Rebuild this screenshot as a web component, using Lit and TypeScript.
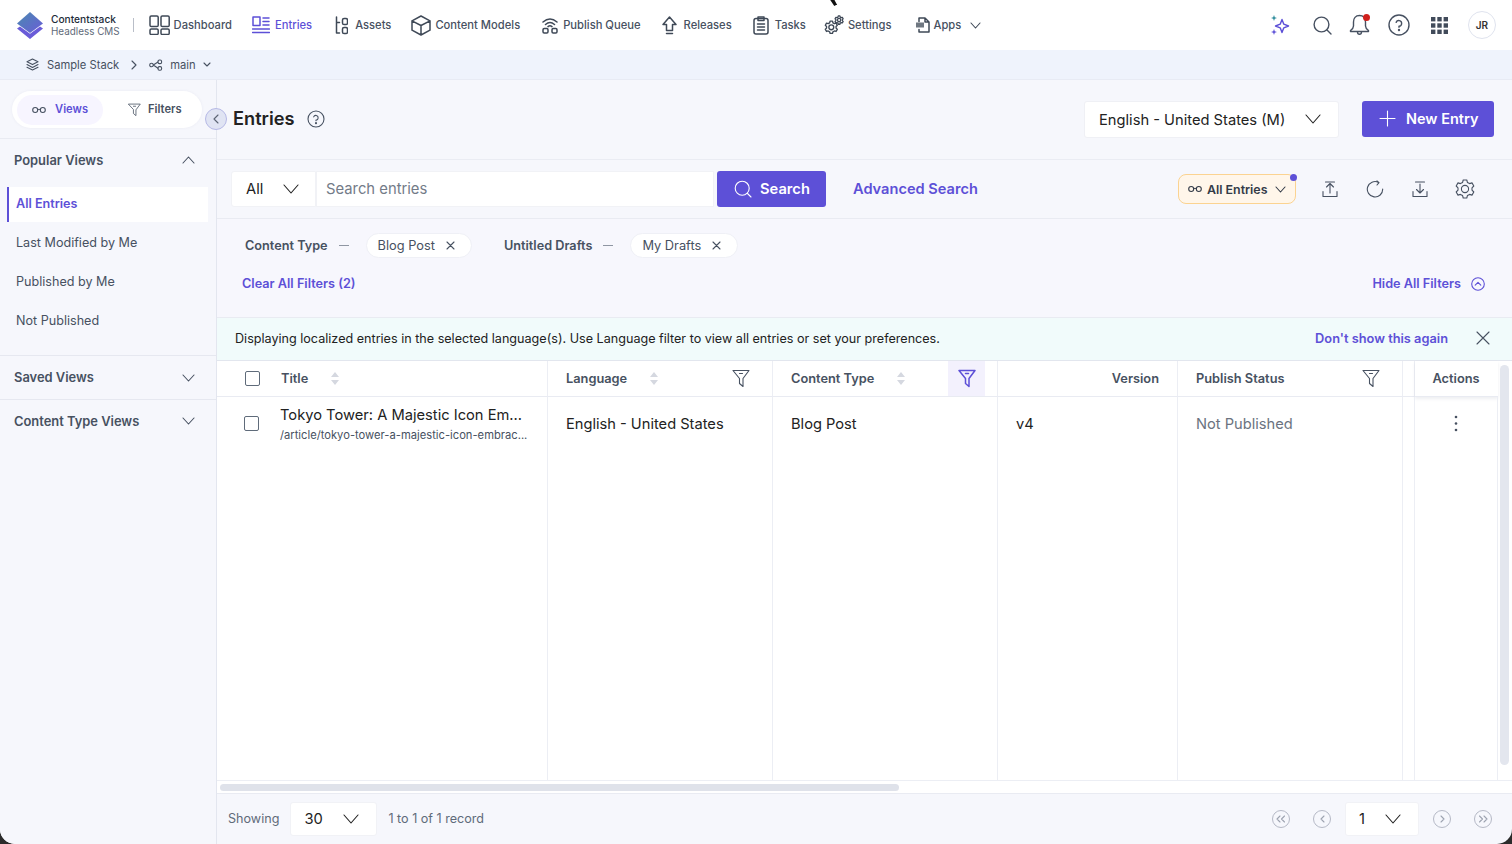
import { LitElement, html, css, svg } from 'lit';
import { customElement } from 'lit/decorators.js';

const icon = (w: number, h: number, body: unknown) => html`<svg class="ic" width=${w} height=${h} viewBox="0 0 ${w} ${h}" fill="none" stroke="currentColor" stroke-width="1.1" stroke-linecap="round" stroke-linejoin="round">${body}</svg>`;

const chevDown = (w = 14) => icon(w, Math.round(w * 0.6), svg`<path d="M1 1 L${w / 2} ${Math.round(w * 0.6) - 1} L${w - 1} 1"/>`);
const chevUp = (w = 14) => icon(w, Math.round(w * 0.6), svg`<path d="M1 ${Math.round(w * 0.6) - 1} L${w / 2} 1 L${w - 1} ${Math.round(w * 0.6) - 1}"/>`);
const cross = (s = 10) => icon(s, s, svg`<path d="M1 1 L${s - 1} ${s - 1} M${s - 1} 1 L1 ${s - 1}"/>`);
const glasses = () => icon(14, 8, svg`<circle cx="3.2" cy="4" r="2.5"/><circle cx="10.8" cy="4" r="2.5"/><path d="M5.7 3.6 Q7 2.8 8.3 3.6"/>`);
const funnel = (s = 18) => icon(s, s + 1, svg`<g transform="scale(${s / 18})"><path d="M1 1.5 H17 L11 9.5 V17.5 L7.5 14.5 V9.5 Z"/><path d="M7.5 4.5 H10.5"/></g>`);
const sort = () => html`<svg class="ic sort" width="8" height="13" viewBox="0 0 8 13" fill="currentColor"><path d="M4 0 L8 5 H0 Z M4 13 L0 8 H8 Z"/></svg>`;
const helpIc = (s: number) => icon(s, s, svg`<circle cx=${s / 2} cy=${s / 2} r=${s / 2 - 1}/><path d="M${s * 0.37} ${s * 0.38} A${s * 0.13} ${s * 0.13} 0 1 1 ${s / 2} ${s * 0.56} V${s * 0.6}"/><circle cx=${s / 2} cy=${s * 0.73} r="0.5"/>`);
const gearPath = svg`<path d="M8.2 1 H11.8 L12.4 3.4 L14.6 4.6 L17 3.9 L18.8 7 L17 8.8 V11.2 L18.8 13 L17 16.1 L14.6 15.4 L12.4 16.6 L11.8 19 H8.2 L7.6 16.6 L5.4 15.4 L3 16.1 L1.2 13 L3 11.2 V8.8 L1.2 7 L3 3.9 L5.4 4.6 L7.6 3.4 Z"/><circle cx="10" cy="10" r="3.6"/>`;

const navItems = [
  { label: 'Dashboard', cls: 'gap-4', icon: icon(21, 20, svg`<rect x="1" y="1" width="8.2" height="10.5" rx="1.3"/><rect x="12" y="1" width="8.2" height="10.5" rx="1.3"/><rect x="1" y="14" width="8.2" height="5.5" rx="1.3"/><rect x="12" y="14" width="8.2" height="5.5" rx="1.3"/>`) },
  { label: 'Entries', cls: 'gap-5 active', icon: icon(18, 19, svg`<rect x="1" y="1" width="7" height="8.5"/><path d="M11 2 H17 M11 5.5 H17 M11 9 H17 M0.5 13 H17.5 M0.5 16.5 H17.5"/>`) },
  { label: 'Assets', cls: 'gap-7 ml-p3', icon: icon(13, 19, svg`<path d="M1.5 1 V17 H4.5 M1.5 6.5 H4.5"/><rect x="7.5" y="2.5" width="5" height="6" rx="1.6"/><rect x="7.5" y="11.5" width="5" height="6" rx="1.6"/>`) },
  { label: 'Content Models', cls: 'gap-4', icon: icon(20, 21, svg`<path d="M10 1 L19 5.8 V15.2 L10 20 L1 15.2 V5.8 Z M1 5.8 L10 10.5 L19 5.8 M10 10.5 V20"/>`) },
  { label: 'Publish Queue', cls: 'gap-5 ml-p2', icon: icon(16, 17, svg`<path d="M1 5 Q8 -1 15 5 M3.5 7.5 Q8 3.5 12.5 7.5 M6 9.6 Q8 8 10 9.6"/><rect x="1" y="11.5" width="5" height="4.5" rx="1.2"/><rect x="10" y="11.5" width="5" height="4.5" rx="1.2"/>`) },
  { label: 'Releases', cls: 'gap-7 ml-p1', icon: icon(15, 19, svg`<path d="M7.5 1 L14 8.5 H10.5 V14.5 H4.5 V8.5 H1 Z M4.5 17.5 H10.5"/>`) },
  { label: 'Tasks', cls: 'gap-6 ml-p1', icon: icon(16, 19, svg`<rect x="1" y="2.5" width="14" height="15.5" rx="2"/><path d="M5 1 H11 V4.5 H5 Z M4.5 8 H11.5 M4.5 11 H11.5 M4.5 14 H11.5"/>`) },
  { label: 'Settings', cls: 'gap-4 ml-n2', icon: icon(20, 20, svg`<g transform="translate(0.5 5.5) scale(.68)" stroke-width="2"><path d="M8.2 1 H11.8 L12.4 3.4 L14.6 4.6 L17 3.9 L18.8 7 L17 8.8 V11.2 L18.8 13 L17 16.1 L14.6 15.4 L12.4 16.6 L11.8 19 H8.2 L7.6 16.6 L5.4 15.4 L3 16.1 L1.2 13 L3 11.2 V8.8 L1.2 7 L3 3.9 L5.4 4.6 L7.6 3.4 Z"/><circle cx="10" cy="10" r="3.6"/></g><g transform="translate(10.5 0.5) scale(.46)" stroke-width="2.8"><path d="M8.2 1 H11.8 L12.4 3.4 L14.6 4.6 L17 3.9 L18.8 7 L17 8.8 V11.2 L18.8 13 L17 16.1 L14.6 15.4 L12.4 16.6 L11.8 19 H8.2 L7.6 16.6 L5.4 15.4 L3 16.1 L1.2 13 L3 11.2 V8.8 L1.2 7 L3 3.9 L5.4 4.6 L7.6 3.4 Z"/><circle cx="10" cy="10" r="3.6"/></g>`) },
  { label: 'Apps', cls: 'gap-4 ml-p3', icon: icon(15, 16, svg`<path d="M4 4.5 V1 H10 L14 5 V15 H4 V12.5 M10 1 V5 H14"/><rect x="1" y="5.5" width="8" height="5" fill="currentColor" stroke="none" opacity=".75"/>`) },
];

const sideItems = ['All Entries', 'Last Modified by Me', 'Published by Me', 'Not Published'];

@customElement('app-root')
export class AppRoot extends LitElement {
  static styles = css`
    :host { display: block; width: 1512px; height: 844px; background: #2b2b2b; overflow: hidden; font-family: Inter, "Noto Sans", sans-serif; color: #222; }
    * { box-sizing: border-box; margin: 0; padding: 0; }
    .ic { display: block; flex: none; }
    .app { position: relative; height: 844px; display: flex; flex-direction: column; background: #f6f7fc; border-radius: 0 0 15px 15px; overflow: hidden; }
    .cursor { position: absolute; left: 822px; top: -8px; }

    .top { height: 50px; flex: none; background: #fff; display: flex; align-items: center; padding-left: 17px; color: #475161; }
    .logo { display: flex; align-items: center; gap: 8px; }
    .logo-t { font-size: 9.9px; line-height: 12px; color: #5f6b7a; white-space: nowrap; }
    .logo-t b { display: block; font-size: 10.2px; line-height: 11px; font-weight: 500; color: #222b38; }
    .sep { width: 1px; height: 14px; background: #b9bec8; margin: 0 15px 0 13px; }
    .nav { display: flex; align-items: center; gap: 20px; }
    .nav-it { display: flex; align-items: center; font-size: 11.2px; font-weight: 500; color: #475161; white-space: nowrap; }
    .nav-it .ic { stroke-width: 1.5; color: #3f4957; }
    .nav-it.active .ic { color: #5d50d7; }
    .gap-4 { gap: 4px; } .gap-5 { gap: 5px; } .gap-6 { gap: 6px; } .gap-7 { gap: 7px; }
    .ml-p1 { margin-left: 1px; } .ml-p2 { margin-left: 2px; } .ml-n2 { margin-left: -2px; } .ml-p3 { margin-left: 3px; }
    .nav-it.active { color: #5d50d7; }
    .nav-it .more { margin-left: 5px; }
    .nav-it .more .ic { stroke-width: 1.1; }
    .top-r { margin-left: auto; display: flex; align-items: center; padding-right: 16px; color: #475161; }
    .top-r .ic { stroke-width: 1.4; }
    .spark { margin-right: 23px; }
    .srch { margin-right: 17px; }
    .bell { margin-right: 18px; position: relative; }
    .bell i { position: absolute; right: 0; top: 0; width: 7px; height: 7px; border-radius: 50%; background: #d0201c; }
    .hlp { margin-right: 21px; }
    .dots { margin-right: 20px; color: #414b5a; }
    .avatar { width: 28px; height: 28px; border-radius: 50%; border: 1px solid #dfe3ee; display: flex; align-items: center; justify-content: center; font-size: 10px; font-weight: 600; color: #333; }

    .sub { height: 30px; flex: none; background: #eff3fc; border-bottom: 1px solid #e8ebf4; display: flex; align-items: center; padding-left: 26px; font-size: 11.2px; font-weight: 400; color: #475161; }
    .sub .name { margin-left: 8px; }
    .sub .gt { margin: 0 12px 0 12px; }
    .sub .main { margin: 0 7px 0 7px; }

    .body { flex: 1; display: flex; min-height: 0; position: relative; }
    .side { width: 217px; flex: none; border-right: 1px solid #e3e6ef; background: #f6f7fc; display: flex; flex-direction: column; }
    .tabs-box { height: 59px; flex: none; padding: 11px 0 0 12px; border-bottom: 1px solid #e9ebf2; }
    .tabs { width: 190px; height: 37px; background: #fff; border-radius: 19px; display: flex; align-items: center; padding-left: 5px; box-shadow: 0 0 3px rgba(90,90,140,.08); }
    .tab { display: flex; align-items: center; height: 30px; font-size: 11.2px; font-weight: 600; color: #475161; }
    .tab span { padding-bottom: 2px; }
    .tab.on { width: 86px; padding-left: 15px; gap: 9px; color: #5d50d7; background: #f7f5ff; border-radius: 15px; }
    .tab.on .ic { color: #475161; }
    .tab.off { margin-left: 25px; gap: 7px; }
    .sec { display: flex; align-items: center; justify-content: space-between; padding: 0 21px 0 14px; font-size: 12.9px; font-weight: 600; color: #475161; }
    .sec.first { height: 42px; margin-bottom: 6px; }
    .sec.rule { height: 44px; border-bottom: 1px solid #e6e8f0; }
    .sec.rule.last { border-bottom: none; padding-bottom: 2px; }
    .items { height: 169px; padding-left: 7px; padding-right: 8px; border-bottom: 1px solid #e6e8f0; }
    .item { height: 35px; margin-bottom: 4px; display: flex; align-items: center; padding: 0 0 2px 9px; font-size: 12.6px; color: #475161; }
    .item.on { background: #fff; border-left: 2px solid #5d50d7; padding-left: 7px; color: #5d50d7; font-weight: 600; }

    .collapse { position: absolute; left: 205px; top: 28px; width: 22px; height: 22px; border-radius: 50%; background: #e0e4f3; border: 1px solid #b6b9e6; display: flex; align-items: center; justify-content: center; color: #5b6473; z-index: 2; }

    .content { flex: 1; min-width: 0; display: flex; flex-direction: column; }
    .head { height: 80px; flex: none; border-bottom: 1px solid #eaecf3; display: flex; align-items: center; padding: 0 18px 2px 16px; }
    .head h1 { font-size: 18.2px; font-weight: 600; color: #222; margin-bottom: 2px; }
    .head .hq { margin-left: 13px; color: #475161; }
    .lang { margin-left: auto; width: 255px; height: 37px; background: #fff; border: 1px solid #eff0f5; border-radius: 3px; display: flex; align-items: center; justify-content: space-between; padding: 0 17px 0 14px; font-size: 14.7px; color: #222; margin-top: 1px; }
    .lang span { padding-top: 2px; }
    .new { margin-left: 23px; width: 132px; height: 36px; border-radius: 3px; background: #5d50d7; color: #fff; display: flex; align-items: center; gap: 10px; padding-left: 17px; font-size: 14.5px; font-weight: 600; }

    .search { height: 59px; flex: none; border-bottom: 1px solid #e9ebf2; display: flex; align-items: center; padding: 0 0 0 14px; }
    .sel-all { width: 85px; height: 36px; background: #fff; border: 1px solid #f1f2f6; border-radius: 3px 0 0 3px; display: flex; align-items: center; justify-content: space-between; padding: 0 16px 0 14px; font-size: 14.7px; color: #222; }
    .input { width: 398px; height: 36px; background: #fff; border: 1px solid #f1f2f6; display: flex; align-items: center; padding: 0 0 1px 9px; font-size: 14.8px; color: #737b88; }
    .sbtn { margin-left: 3px; width: 109px; height: 36px; background: #5d50d7; color: #fff; border-radius: 3px; display: flex; align-items: center; gap: 8px; padding-left: 17px; font-size: 14.7px; font-weight: 600; }
    .sbtn span { padding-bottom: 1px; }
    .adv { margin-left: 27px; padding-bottom: 1px; font-size: 14.6px; font-weight: 600; color: #5d50d7; }
    .allp { position: relative; margin-left: auto; width: 118px; height: 30px; background: #fff6ea; border: 1px solid #fbd391; border-radius: 8px; display: flex; align-items: center; gap: 5px; padding-left: 9px; font-size: 12.4px; font-weight: 600; color: #333b48; }
    .allp .cv { margin-left: 2px; }
    .allp i { position: absolute; right: -2px; top: -1px; width: 7px; height: 7px; border-radius: 50%; background: #5d50d7; }
    .tools { margin-left: 26px; display: flex; align-items: center; gap: 28px; padding-right: 37px; color: #475161; }
    .tools .last { margin-left: -1px; }

    .filters { height: 99px; flex: none; border-bottom: 1px solid #e9ebf2; background: #f7f7fd; display: flex; flex-direction: column; padding: 14px 27px 0 25px; }
    .f-row { display: flex; align-items: center; height: 25px; font-size: 12.8px; color: #475161; padding-left: 3px; }
    .f-row b { font-size: 12.7px; font-weight: 600; }
    .dash { width: 10px; height: 1px; background: #8f96a3; margin: 0 17px 0 11px; }
    .chip { height: 25px; background: #fff; border: 1px solid #eff0f6; border-radius: 13px; display: flex; align-items: center; gap: 11px; padding: 0 16px 0 11px; margin-right: 32px; }
    .f-act { display: flex; align-items: center; justify-content: space-between; margin-top: 18px; font-size: 12.7px; font-weight: 600; color: #5d50d7; }
    .f-hide { display: flex; align-items: center; gap: 10px; }

    .banner { height: 43px; flex: none; background: #f1fbfb; border-bottom: 1px solid #e2e6ee; display: flex; align-items: center; justify-content: space-between; padding: 0 22px 2px 18px; font-size: 12.6px; color: #222; }
    .banner span { display: flex; align-items: center; gap: 28px; font-size: 12.8px; font-weight: 600; color: #5d50d7; }
    .banner svg { color: #475161; }

    .tbl { flex: 1; min-height: 0; background: #fff; display: flex; position: relative; border-bottom: 1px solid #eceef4; }
    .grid { flex: 1; display: grid; grid-template-columns: 331px 225px 225px 180px 225px 12px 83px; grid-template-rows: 36px 1fr; }
    .th { display: flex; align-items: center; border-bottom: 1px solid #e9ebf2; border-right: 1px solid #eceef4; font-size: 12.8px; font-weight: 600; color: #475161; padding: 0 22px 0 18px; }
    .td { border-right: 1px solid #eceef4; padding: 18px 14px 0 18px; font-size: 14.65px; color: #222; line-height: 19px; }
    .th .sort { color: #d5d8e0; margin-left: 23px; }
    .th .fn { margin-left: auto; color: #475161; }
    .th.t { padding-left: 28px; }
    .cb { width: 15px; height: 15px; border: 1.5px solid #5f6b7a; border-radius: 2px; background: #fff; flex: none; }
    .th.t .lbl { margin-left: 21px; }
    .th.lit { padding-right: 0; }
    .th.lit .fbox { margin-left: auto; width: 37px; height: 35px; background: #f3f1fd; color: #5d50d7; display: flex; align-items: center; justify-content: center; margin-right: 12px; }
    .th.lit .fbox .ic { stroke-width: 1.5; }
    .th.v { justify-content: flex-end; padding-right: 18px; }
    .th.gapc, .td.gapc { padding: 0; }
    .th.act { justify-content: center; padding: 0 1px 0 0; border-right: none; box-shadow: 0 2px 3px rgba(90,100,130,.1); }
    .td.t { display: flex; padding: 8px 0 0 27px; gap: 21px; }
    .td.t .cb { margin-top: 11px; }
    .td.t .meta { min-width: 0; }
    .td.t .ttl { font-size: 14.7px; line-height: 20px; white-space: nowrap; }
    .td.t .url { font-size: 11.2px; line-height: 20px; color: #475161; white-space: nowrap; }
    .td.muted { color: #6b7380; }
    .td.ac { border-right: 1px solid #eceef4; display: flex; justify-content: center; padding: 18px 0 0; color: #475161; }
    .vbar { width: 14px; flex: none; padding: 4px 2px 15px 2px; }
    .vbar i { display: block; height: 100%; width: 9px; margin-left: 0; border-radius: 5px; background: #e3e6ee; }
    .hbar { height: 13px; flex: none; background: #fff; border-bottom: 1px solid #e9ebf2; padding: 3px 0 0 3px; }
    .hbar i { display: block; width: 679px; height: 7px; border-radius: 4px; background: #dfe2ea; }

    .foot { height: 50px; flex: none; display: flex; align-items: center; padding: 0 20px 0 11px; font-size: 12.6px; color: #5f6b7a; }
    .foot > span { padding-bottom: 2px; }
    .pgs { width: 87px; height: 34px; background: #fff; border: 1px solid #f1f2f6; border-radius: 3px; display: flex; align-items: center; justify-content: space-between; padding: 0 17px 0 13px; font-size: 14.7px; color: #222; margin: 0 11px 0 11px; }
    .pager { margin-left: auto; display: flex; align-items: center; color: #9da3b0; gap: 14px; }
    .pager .pgs { width: 74px; margin: 0; padding: 0 17px 0 13px; }
    .rnd { width: 18px; height: 18px; border: 1px solid #b4b8c5; border-radius: 50%; display: flex; align-items: center; justify-content: center; flex: none; }
    .rnd.first { margin-right: 9px; }
    .rnd.end { margin-left: 9px; }
  `;

  render() {
    return html`
      <div class="app">
        <div class="top">
          <div class="logo">
            <svg class="ic" width="26" height="27" viewBox="0 0 26 27">
              <defs><linearGradient id="lg" x1="0" y1="0" x2="1" y2="1"><stop offset="0" stop-color="#4a8ab0"/><stop offset="1" stop-color="#6a5cd8"/></linearGradient></defs>
              <path d="M13 0 L26 11.5 L13 21 L0 11.5 Z" fill="url(#lg)"/>
              <path d="M3 14.5 L13 21.8 L23 14.5 L26 16.5 L13 27 L0 16.5 Z" fill="#6a5cd8"/>
            </svg>
            <div class="logo-t"><b>Contentstack</b>Headless CMS</div>
          </div>
          <div class="sep"></div>
          <div class="nav">
            ${navItems.map((n) => html`<div class="nav-it ${n.cls}">${n.icon}<span>${n.label}</span>${n.label === 'Apps' ? html`<span class="more">${chevDown(11)}</span>` : ''}</div>`)}
          </div>
          <div class="top-r">
            <span class="spark"><svg class="ic" width="19" height="20" viewBox="0 0 19 20" fill="none">
              <path d="M11 4.5 L12.8 9.2 L17.5 11 L12.8 12.8 L11 17.5 L9.2 12.8 L4.5 11 L9.2 9.2 Z" stroke="#5d50d7" stroke-linejoin="round"/>
              <path d="M3 0 L3.8 2.2 L6 3 L3.8 3.8 L3 6 L2.2 3.8 L0 3 L2.2 2.2 Z" fill="#2e8c9c" stroke="none"/>
              <path d="M3 14 L3.8 16.2 L6 17 L3.8 17.8 L3 20 L2.2 17.8 L0 17 L2.2 16.2 Z" fill="#5d50d7" stroke="none"/>
            </svg></span>
            <span class="srch">${icon(19, 19, svg`<circle cx="8.5" cy="8.5" r="7.4"/><path d="M14 14 L18 18"/>`)}</span>
            <span class="bell">${icon(21, 22, svg`<path d="M10.5 1.5 C6.5 1.5 4.5 4.5 4.5 8 V12 C4.5 14 3.5 15 1.5 16.5 V17.5 H19.5 V16.5 C17.5 15 16.5 14 16.5 12 V8 C16.5 4.5 14.5 1.5 10.5 1.5 Z M8.5 18 C8.5 21 12.5 21 12.5 18"/>`)}<i></i></span>
            <span class="hlp">${helpIc(22)}</span>
            <span class="dots"><svg class="ic" width="17" height="17" viewBox="0 0 17 17" fill="currentColor"><rect width="4.4" height="4.4"/><rect x="6.3" width="4.4" height="4.4"/><rect x="12.6" width="4.4" height="4.4"/><rect y="6.3" width="4.4" height="4.4"/><rect x="6.3" y="6.3" width="4.4" height="4.4"/><rect x="12.6" y="6.3" width="4.4" height="4.4"/><rect y="12.6" width="4.4" height="4.4"/><rect x="6.3" y="12.6" width="4.4" height="4.4"/><rect x="12.6" y="12.6" width="4.4" height="4.4"/></svg></span>
            <div class="avatar">JR</div>
          </div>
        </div>

        <div class="sub">
          ${icon(13, 13, svg`<path d="M6.5 1 L12 3.8 L6.5 6.6 L1 3.8 Z M1 6.6 L6.5 9.4 L12 6.6 M1 9.2 L6.5 12 L12 9.2"/>`)}
          <span class="name">Sample Stack</span>
          <span class="gt">${icon(6, 10, svg`<path d="M1 1 L5 5 L1 9"/>`)}</span>
          ${icon(14, 12, svg`<circle cx="2.5" cy="6" r="1.8"/><rect x="9" y="1" width="3.6" height="3.6" rx="1.4"/><rect x="9" y="7.6" width="3.6" height="3.6" rx="1.4"/><path d="M4.3 6 L9 3 M4.3 6 L9 9.2"/>`)}
          <span class="main">main</span>
          ${chevDown(8)}
        </div>

        <div class="body">
          <aside class="side">
            <div class="tabs-box">
              <div class="tabs">
                <div class="tab on">${glasses()}<span>Views</span></div>
                <div class="tab off">${funnel(13)}<span>Filters</span></div>
              </div>
            </div>
            <div class="sec first"><span>Popular Views</span>${chevUp(13)}</div>
            <div class="items">
              ${sideItems.map((s, i) => html`<div class="item ${i === 0 ? 'on' : ''}">${s}</div>`)}
            </div>
            <div class="sec rule"><span>Saved Views</span>${chevDown(13)}</div>
            <div class="sec rule last"><span>Content Type Views</span>${chevDown(13)}</div>
          </aside>
          <div class="collapse">${icon(6, 10, svg`<path d="M5 1 L1 5 L5 9"/>`)}</div>

          <main class="content">
            <div class="head">
              <h1>Entries</h1>
              <span class="hq">${helpIc(18)}</span>
              <div class="lang"><span>English - United States (M)</span>${chevDown(16)}</div>
              <div class="new">${icon(17, 17, svg`<path d="M8.5 1 V16 M1 8.5 H16"/>`)}<span>New Entry</span></div>
            </div>

            <div class="search">
              <div class="sel-all"><span>All</span>${chevDown(16)}</div>
              <div class="input">Search entries</div>
              <div class="sbtn">${icon(18, 18, svg`<circle cx="8.2" cy="8.2" r="7"/><path d="M13.5 13.5 L17 17"/>`)}<span>Search</span></div>
              <div class="adv">Advanced Search</div>
              <div class="allp">${glasses()}<span>All Entries</span><span class="cv">${chevDown(11)}</span><i></i></div>
              <div class="tools">
                ${icon(16, 17, svg`<path d="M8 12 V3 M4.5 6 L8 2.5 L11.5 6 M1 10.5 V15.5 H15 V10.5 M3.5 1 H12.5"/>`)}
                ${icon(18, 18, svg`<path d="M12.5 2.4 A7.7 7.7 0 1 0 16.7 9 M11 0.8 L13 2.6 L11 5"/>`)}
                ${icon(16, 17, svg`<path d="M8 3 V12 M4.5 8.5 L8 12 L11.5 8.5 M1 10.5 V15.5 H15 V10.5 M3.5 1 H12.5"/>`)}
                <span class="last">${icon(20, 20, gearPath)}</span>
              </div>
            </div>

            <div class="filters">
              <div class="f-row">
                <b>Content Type</b><span class="dash"></span>
                <div class="chip"><span>Blog Post</span>${cross(9)}</div>
                <b>Untitled Drafts</b><span class="dash"></span>
                <div class="chip"><span>My Drafts</span>${cross(9)}</div>
              </div>
              <div class="f-act">
                <span>Clear All Filters (2)</span>
                <span class="f-hide">Hide All Filters ${icon(14, 14, svg`<circle cx="7" cy="7" r="6.3"/><path d="M4.2 8.2 L7 5.4 L9.8 8.2"/>`)}</span>
              </div>
            </div>

            <div class="banner">
              Displaying localized entries in the selected language(s). Use Language filter to view all entries or set your preferences.
              <span>Don't show this again ${cross(14)}</span>
            </div>

            <div class="tbl">
              <div class="grid">
                <div class="th t"><span class="cb"></span><span class="lbl">Title</span>${sort()}</div>
                <div class="th"><span>Language</span>${sort()}<span class="fn">${funnel(18)}</span></div>
                <div class="th lit"><span>Content Type</span>${sort()}<span class="fbox">${funnel(18)}</span></div>
                <div class="th v">Version</div>
                <div class="th"><span>Publish Status</span><span class="fn">${funnel(18)}</span></div>
                <div class="th gapc"></div>
                <div class="th act">Actions</div>

                <div class="td t">
                  <span class="cb"></span>
                  <div class="meta">
                    <div class="ttl">Tokyo Tower: A Majestic Icon Em...</div>
                    <div class="url">/article/tokyo-tower-a-majestic-icon-embrac...</div>
                  </div>
                </div>
                <div class="td">English - United States</div>
                <div class="td">Blog Post</div>
                <div class="td">v4</div>
                <div class="td muted">Not Published</div>
                <div class="td gapc"></div>
                <div class="td ac"><svg class="ic" width="4" height="17" viewBox="0 0 4 17" fill="currentColor"><circle cx="2" cy="2" r="1.3"/><circle cx="2" cy="8.5" r="1.3"/><circle cx="2" cy="15" r="1.3"/></svg></div>
              </div>
              <div class="vbar"><i></i></div>
            </div>
            <div class="hbar"><i></i></div>

            <div class="foot">
              <span>Showing</span>
              <div class="pgs"><span>30</span>${chevDown(16)}</div>
              <span>1 to 1 of 1 record</span>
              <div class="pager">
                <span class="rnd first">${icon(10, 8, svg`<path d="M4 1 L1 4 L4 7 M8.5 1 L5.5 4 L8.5 7"/>`)}</span>
                <span class="rnd">${icon(5, 8, svg`<path d="M4 1 L1 4 L4 7"/>`)}</span>
                <div class="pgs"><span>1</span>${chevDown(16)}</div>
                <span class="rnd">${icon(5, 8, svg`<path d="M1 1 L4 4 L1 7"/>`)}</span>
                <span class="rnd end">${icon(10, 8, svg`<path d="M1.5 1 L4.5 4 L1.5 7 M6 1 L9 4 L6 7"/>`)}</span>
              </div>
            </div>
          </main>
        </div>
        <svg class="cursor" width="18" height="16" viewBox="0 0 18 16"><path d="M2 0 L9 0 L16 13 L12 15 Z" fill="#111" stroke="#fff" stroke-width="1.5"/></svg>
      </div>
    `;
  }
}
